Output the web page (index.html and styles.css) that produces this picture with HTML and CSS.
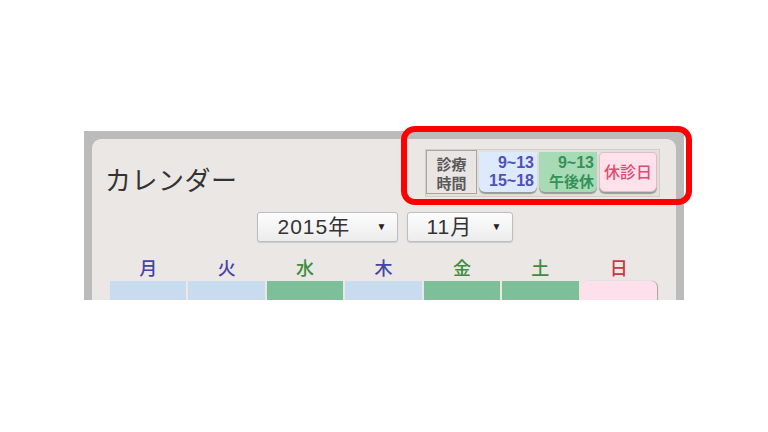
FILE: index.html
```html
<!DOCTYPE html>
<html lang="ja">
<head>
<meta charset="utf-8">
<link rel="stylesheet" href="styles.css">
</head>
<body>
<div class="stage">
  <div class="frame">
    <div class="panel">
      <div class="header">
        <h1 class="title">カレンダー</h1>
        <div class="legend">
          <div class="lg lg-label"><span class="ln">診療</span><span class="ln">時間</span></div>
          <div class="lg lg-blue"><span class="ln">9~13</span><span class="ln">15~18</span></div>
          <div class="lg lg-green"><span class="ln">9~13</span><span class="ln">午後休</span></div>
          <div class="lg lg-pink">休診日</div>
        </div>
      </div>
      <div class="selects">
        <div class="sel sel-year"><span>2015年</span><span class="arrow">▼</span></div>
        <div class="sel sel-month"><span>11月</span><span class="arrow">▼</span></div>
      </div>
      <div class="grid">
        <div class="wd wd-blue">月</div>
        <div class="wd wd-blue">火</div>
        <div class="wd wd-green">水</div>
        <div class="wd wd-blue">木</div>
        <div class="wd wd-green">金</div>
        <div class="wd wd-green">土</div>
        <div class="wd wd-red">日</div>
        <div class="cell c-blue"></div>
        <div class="cell c-blue"></div>
        <div class="cell c-green"></div>
        <div class="cell c-blue"></div>
        <div class="cell c-green"></div>
        <div class="cell c-green"></div>
        <div class="cell c-pink"></div>
      </div>
    </div>
  </div>
  <div class="highlight"></div>
</div>
</body>
</html>
```
FILE: styles.css
```css
html, body {
  margin: 0;
  padding: 0;
  background: #ffffff;
}
body {
  width: 768px;
  height: 432px;
  overflow: hidden;
  font-family: "Noto Sans CJK JP", "Liberation Sans", sans-serif;
}
.stage {
  position: relative;
  padding: 131px 0 0 84px;
}
.frame {
  box-sizing: border-box;
  width: 600px;
  height: 169px;
  background: #bbbbbb;
  padding: 8px 8px 0 8px;
  overflow: hidden;
}
.panel {
  box-sizing: border-box;
  height: 100%;
  background: #ebe7e4;
  border-radius: 9px 9px 0 0;
  padding: 10px 19px 0 18px;
}
.header {
  display: flex;
  justify-content: space-between;
  align-items: flex-start;
  height: 48px;
}
.title {
  margin: 15px 0 0 -5px;
  font-size: 26px;
  font-weight: 400;
  line-height: 30px;
  color: #333333;
  letter-spacing: 0.5px;
}
.legend {
  display: flex;
  gap: 2px;
  box-sizing: border-box;
  height: 48px;
  margin-right: -3px;
  padding: 2px 2px 0 1px;
  border: 1px solid #d2cdc9;
  background: #e4e0dd;
}
.lg {
  box-sizing: border-box;
  display: flex;
  flex-direction: column;
  font-family: "Liberation Sans", "Noto Sans CJK JP", sans-serif;
  font-size: 16px;
  font-weight: 700;
  line-height: 18px;
  height: 40px;
  padding: 2px 3px 0 3px;
}
.ln {
  display: block;
  height: 18px;
  overflow: visible;
}
.lg-label {
  width: 51px;
  height: 44px;
  margin: -2px 0 0 -1px;
  padding-top: 3px;
  border: 1px solid #a9a5a2;
  background: #e9e5e2;
  color: #5a5a5a;
  font-family: "Noto Sans CJK JP", sans-serif;
  font-weight: 700;
  align-items: center;
  font-size: 15px;
  line-height: 19px;
}
.lg-label .ln {
  height: 19px;
}
.lg-blue {
  width: 58px;
  background: #dde9fd;
  color: #5050b8;
  align-items: flex-end;
  border-radius: 0 0 6px 6px;
  box-shadow: 0 2px 1px #9a9a9a;
}
.lg-green {
  width: 58px;
  background: #a7dbb6;
  color: #35915a;
  align-items: flex-end;
  border-radius: 0 0 6px 6px;
  box-shadow: 0 2px 1px #9a9a9a;
}
.lg-green .ln + .ln {
  font-family: "Noto Sans CJK JP", sans-serif;
  font-size: 15px;
}
.lg-pink {
  width: 58px;
  background: #fde1eb;
  color: #e04a72;
  align-items: center;
  justify-content: center;
  border-radius: 4px 4px 6px 6px;
  box-shadow: 0 2px 1px #9a9a9a;
  font-family: "Noto Sans CJK JP", sans-serif;
  font-size: 16px;
  font-weight: 500;
  padding: 0 0 2px 0;
  border: 1px solid #e2bcc8;
}
.selects {
  display: flex;
  justify-content: center;
  gap: 9px;
  margin-top: 15px;
  padding-left: 2px;
}
.sel {
  box-sizing: border-box;
  height: 30px;
  display: flex;
  align-items: center;
  justify-content: space-between;
  border: 1px solid #bdbdbd;
  border-radius: 3px;
  background: linear-gradient(#fdfdfd, #ececec);
  box-shadow: 0 1px 1px rgba(0,0,0,0.12);
  color: #333333;
  font-family: "Liberation Sans", "Noto Sans CJK JP", sans-serif;
  font-size: 21px;
  line-height: 28px;
  letter-spacing: 1px;
}
.sel-year {
  width: 141px;
  padding: 0 10px 0 20px;
}
.sel-month {
  width: 106px;
  padding: 0 10px 0 19px;
}
.arrow {
  font-size: 10px;
  color: #222222;
  letter-spacing: 0;
}
.grid {
  display: grid;
  grid-template-columns: repeat(7, 1fr);
  column-gap: 2px;
  row-gap: 3px;
  margin-top: 14px;
}
.wd {
  text-align: center;
  font-size: 18px;
  line-height: 22px;
  font-weight: 500;
}
.wd-blue { color: #4444a8; }
.wd-green { color: #3f8c3f; }
.wd-red { color: #c83848; }
.cell {
  height: 40px;
}
.c-blue { background: #c9dcef; }
.c-green { background: #7cbf99; }
.c-pink {
  background: #fde0ec;
  border-radius: 6px 6px 0 0;
  box-shadow: 1px 0 1px #a8a4a2;
}
.highlight {
  position: absolute;
  left: 401px;
  top: 126px;
  width: 291px;
  height: 79px;
  box-sizing: border-box;
  border: 6px solid #ff0000;
  border-radius: 14px;
}
```
